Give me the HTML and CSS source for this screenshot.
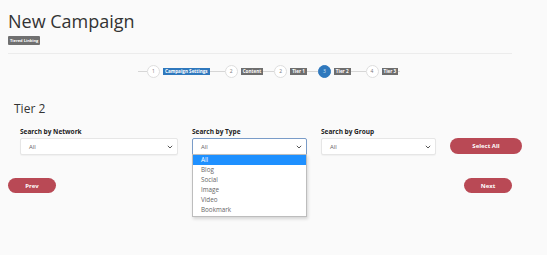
FILE: index.html
```html
<!DOCTYPE html>
<html lang="en">
<head>
  <meta charset="UTF-8">
  <title>New Campaign</title>
  <link rel="stylesheet" href="styles.css">
</head>
<body>
  <main>
    <header class="page-head">
      <h1>New Campaign</h1>
      <span class="tag">Tiered Linking</span>
    </header>

    <nav class="stepper">
      <span class="line first"></span>
      <span class="dot">1</span>
      <span class="step-label active">Campaign Settings</span>
      <span class="line"></span>
      <span class="dot">2</span>
      <span class="step-label">Content</span>
      <span class="line short"></span>
      <span class="dot">2</span>
      <span class="step-label">Tier 1</span>
      <span class="line short"></span>
      <span class="dot current">3</span>
      <span class="step-label">Tier 2</span>
      <span class="line"></span>
      <span class="dot">4</span>
      <span class="step-label">Tier 3</span>
      <span class="line last"></span>
    </nav>

    <h2>Tier 2</h2>

    <section class="filters">
      <div class="field">
        <label>Search by Network</label>
        <div class="select">
          <span>All</span>
          <svg width="6" height="4" viewBox="0 0 6 4"><path d="M0.8 0.8 L3 3 L5.2 0.8" fill="none" stroke="#444" stroke-width="0.9"/></svg>
        </div>
      </div>

      <div class="field">
        <label>Search by Type</label>
        <div class="select open">
          <span>All</span>
          <svg width="6" height="4" viewBox="0 0 6 4"><path d="M0.8 0.8 L3 3 L5.2 0.8" fill="none" stroke="#444" stroke-width="0.9"/></svg>
          <div class="options">
            <div class="option selected">All</div>
            <div class="option">Blog</div>
            <div class="option">Social</div>
            <div class="option">Image</div>
            <div class="option">Video</div>
            <div class="option">Bookmark</div>
          </div>
        </div>
      </div>

      <div class="field">
        <label>Search by Group</label>
        <div class="select">
          <span>All</span>
          <svg width="6" height="4" viewBox="0 0 6 4"><path d="M0.8 0.8 L3 3 L5.2 0.8" fill="none" stroke="#444" stroke-width="0.9"/></svg>
        </div>
      </div>

      <div class="field action">
        <button class="btn">Select All</button>
      </div>
    </section>

    <div class="nav-buttons">
      <button class="btn small">Prev</button>
      <button class="btn small">Next</button>
    </div>
  </main>
</body>
</html>
```

FILE: styles.css
```css
:root {
  --bg: #fafafa;
  --text: #333;
  --blue: #2f78bd;
  --red: #b94955;
}

html, body {
  margin: 0;
  padding: 0;
}

body {
  min-height: 255px;
  background: var(--bg);
  font-family: "Open Sans", "Liberation Sans", sans-serif;
  color: var(--text);
}

main {
  width: 504px;
  padding: 8px 0 0 8px;
}

.page-head {
  border-bottom: 1px solid #ececec;
  padding-bottom: 8px;
}

h1 {
  margin: 0;
  font-size: 18px;
  font-weight: 400;
  line-height: 26px;
}

.tag {
  display: block;
  width: fit-content;
  margin-top: 2px;
  background: #707070;
  color: white;
  font-size: 4px;
  font-weight: 700;
  line-height: 9px;
  padding: 0 2px;
  border-radius: 1px;
}

.stepper {
  display: flex;
  align-items: center;
  margin: 10px 0 0 130px;
  height: 14px;
}

.line {
  width: 15px;
  height: 1px;
  background: #d6d6d6;
}

.line.short {
  width: 11px;
}

.line.first {
  width: 9px;
}

.line.last {
  width: 2px;
}

.dot {
  width: 11px;
  height: 11px;
  border: 1px solid #dedede;
  border-radius: 50%;
  background: white;
  color: #777;
  font-size: 5px;
  display: flex;
  align-items: center;
  justify-content: center;
  margin-right: 3px;
}

.dot.current {
  background: var(--blue);
  border-color: var(--blue);
  color: #dfe9f5;
}

.step-label {
  background: #6e6e6e;
  color: white;
  font-size: 4.6px;
  font-weight: 700;
  line-height: 7px;
  padding: 0 2px;
}

.step-label.active {
  background: var(--blue);
}

h2 {
  margin: 23px 0 0 6px;
  font-size: 12px;
  font-weight: 400;
  line-height: 16px;
}

.filters {
  display: grid;
  grid-template-columns: 158px 115px 115px 72px;
  column-gap: 14px;
  margin: 10px 0 0 12px;
}

.field label {
  display: block;
  font-size: 6.5px;
  font-weight: 700;
  color: #222;
  line-height: 9px;
  margin-bottom: 2px;
}

.select {
  position: relative;
  height: 15px;
  background: white;
  border: 1px solid #e6e6e6;
  border-radius: 2px;
  display: flex;
  align-items: center;
  justify-content: space-between;
  padding: 0 4px 0 8px;
  font-size: 6px;
  color: #666;
  box-shadow: 0 1px 1px rgba(0, 0, 0, 0.04);
}

.select.open {
  border-color: #7a9cc8;
  border-radius: 2px 2px 0 0;
}

.options {
  position: absolute;
  top: 15px;
  left: -1px;
  right: -1px;
  height: 60px;
  padding-bottom: 1px;
  background: white;
  border: 1px solid #bdbdbd;
  box-shadow: 1px 2px 3px rgba(0, 0, 0, 0.15);
  z-index: 2;
}

.option {
  height: 10px;
  line-height: 10px;
  padding-left: 8px;
  color: #666;
  font-size: 6.3px;
}

.option.selected {
  background: #1e90ff;
  color: white;
}

.field.action {
  display: flex;
  align-items: flex-end;
}

.btn {
  background: var(--red);
  color: white;
  border: none;
  border-radius: 9px;
  font-family: inherit;
  font-size: 6px;
  font-weight: 700;
  height: 16px;
  width: 72px;
  padding: 0;
  margin-bottom: 1px;
}

.nav-buttons {
  display: flex;
  justify-content: space-between;
  margin-top: 23px;
}

.btn.small {
  width: 48px;
  height: 15px;
  border-radius: 8px;
}
```
